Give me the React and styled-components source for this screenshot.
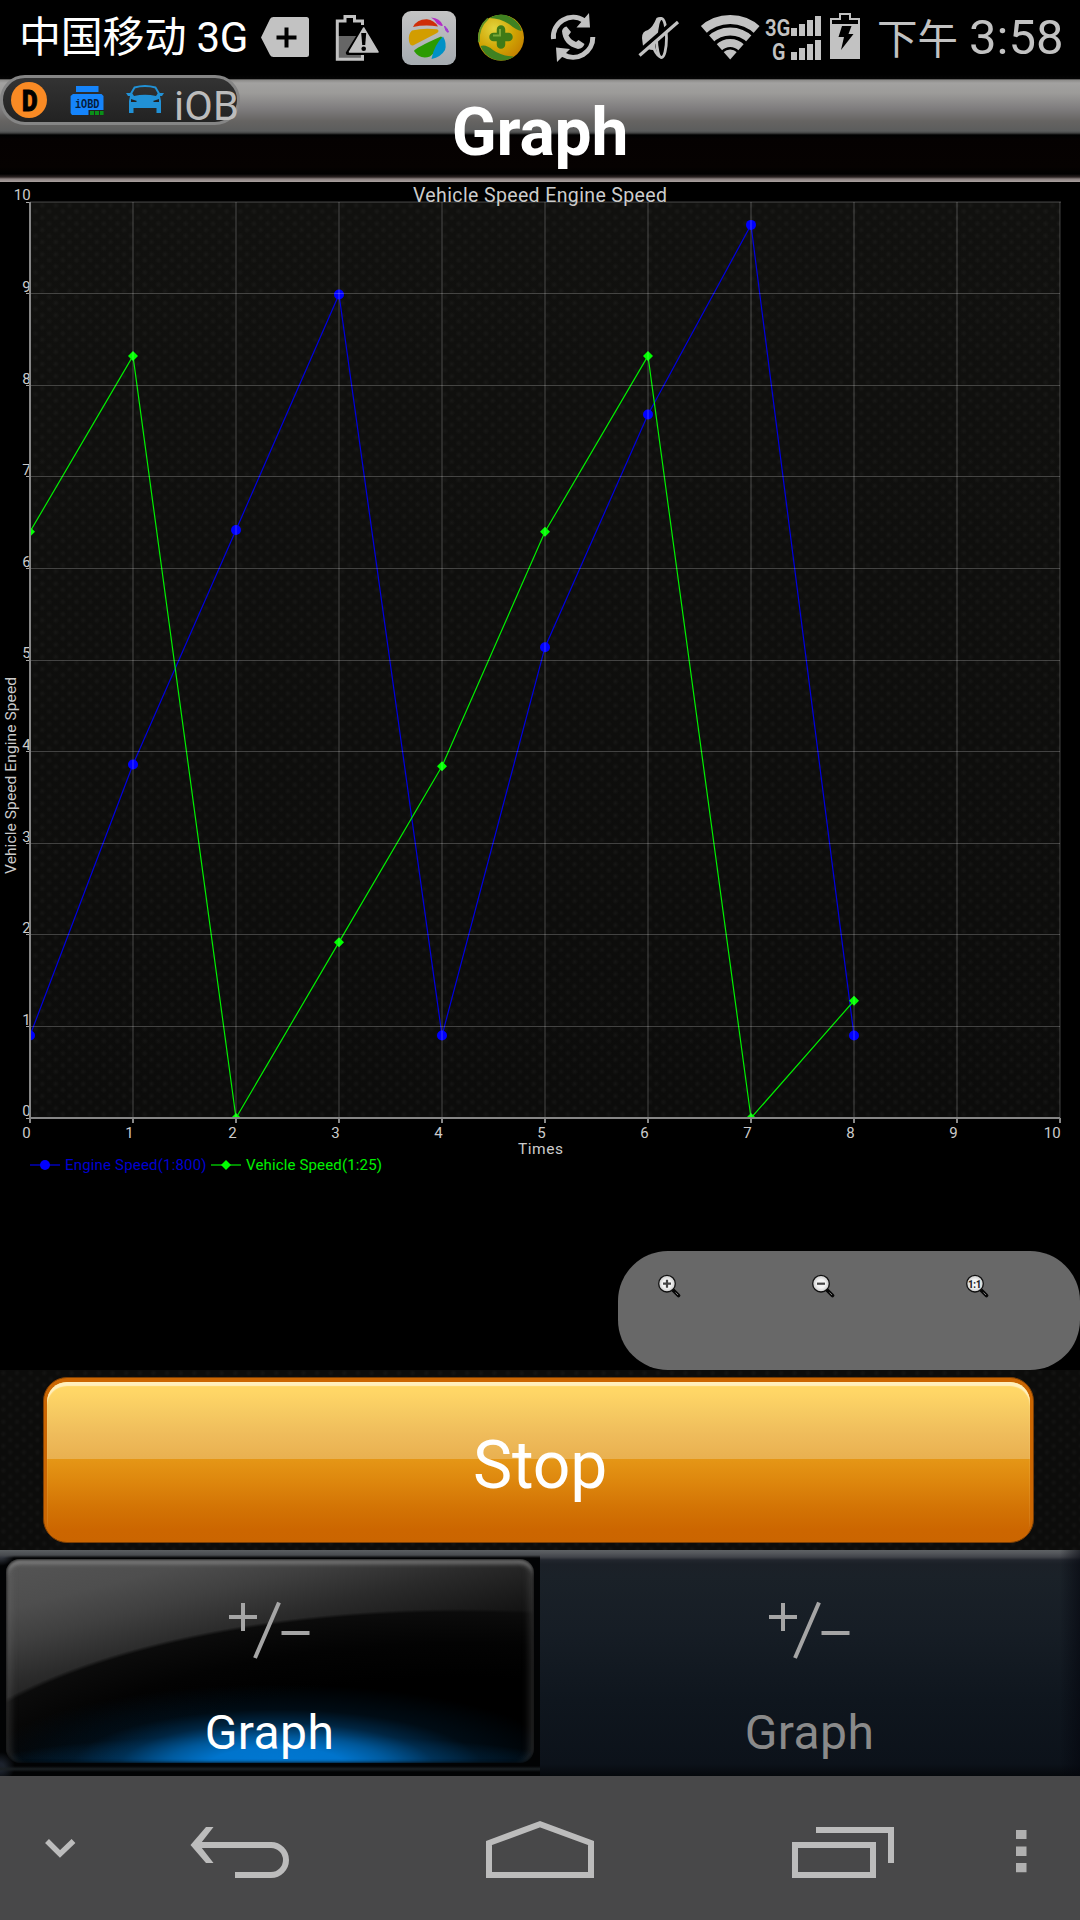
import React from "react";
import styled, { createGlobalStyle } from "styled-components";

const GlobalStyle = createGlobalStyle`
  * { box-sizing: border-box; }
  body { margin: 0; background: #000; font-family: Roboto, "Noto Sans CJK SC", sans-serif; }
  svg { display: block; }
  button { font: inherit; border: 0; padding: 0; background: none; color: inherit; }
`;

const weave = `
  radial-gradient(circle at 3.4px 3px, rgba(255,255,255,0.035) 0, rgba(255,255,255,0) 3.4px) 0 0 / 13.65px 12.2px,
  radial-gradient(circle at 10.2px 9.1px, rgba(255,255,255,0.035) 0, rgba(255,255,255,0) 3.4px) 0 0 / 13.65px 12.2px,
  #0c0c0b`;

const Screen = styled.div`
  position: relative;
  width: 1080px;
  height: 1920px;
  overflow: hidden;
  display: flex;
  flex-direction: column;
  background: #000;
`;

const StatusBar = styled.div`
  height: 75px;
  flex: none;
  display: flex;
  color: #c2c2c2;
`;
const Carrier = styled.div`
  width: 249px;
  padding-left: 19px;
  font-size: 42px;
  line-height: 76px;
  letter-spacing: -0.2px;
  white-space: nowrap;
  color: #fff;
`;
const StatusRight = styled.div`
  display: flex;
  margin-left: auto;
`;
const Clock = styled.div`
  width: 213px;
  padding-left: 10px;
  display: flex;
  align-items: baseline;
  white-space: nowrap;
  line-height: 76px;
`;
const Period = styled.span`
  font-size: 40.5px;
  width: 80px;
`;
const Time = styled.span`
  font-size: 49px;
  margin-left: 12px;
  letter-spacing: 0;
`;

const Header = styled.header`
  height: 107px;
  flex: none;
  display: flex;
  justify-content: center;
  padding-top: 19px;
  background: linear-gradient(
    #000 0, #050505 3.5px, #8c8b89 5px, #a2a1a0 8px, #9c9b99 18px, #7e7c7d 34px, #666462 46px,
    #5b5c5c 56px, #424343 58px, #000 60px, #050101 64px, #060201 92px, #000 99px,
    #2b2322 102px, #8b8180 104px, #aaa19f 107px
  );
`;
const Title = styled.h1`
  margin: 0;
  font-size: 66px;
  line-height: 77px;
  font-weight: 700;
  letter-spacing: -0.2px;
  color: #fff;
`;

const FloatingBadge = styled.div`
  position: absolute;
  left: 0;
  top: 75px;
  width: 240px;
  height: 50px;
  border: 3px solid #858585;
  border-radius: 25px;
  background: linear-gradient(#333, #222);
`;
const FloatingContent = styled.div`
  margin: -3px 0 0 -3px;
  display: flex;
  width: 244px;
  height: 50px;
`;
const FloatingText = styled.span`
  font-size: 41.5px;
  line-height: 62px;
  letter-spacing: 0.2px;
  color: #bcbcbc;
`;

const ChartPanel = styled.section`
  height: 1188px;
  flex: none;
  display: flex;
  flex-direction: column;
  background: #000;
`;
const ZoomControls = styled.div`
  align-self: flex-end;
  display: grid;
  grid-template-columns: repeat(3, 1fr);
  width: 462px;
  height: 119px;
  border-radius: 50px;
  background: #686868;
`;
const ZoomButton = styled.button`
  display: flex;
  align-items: flex-start;
  padding: 22px 0 0 38px;
`;

const ActionArea = styled.section`
  height: 180px;
  flex: none;
  padding: 7px 46px 7px 43px;
  background: ${weave};
`;
const StopButton = styled.button`
  width: 100%;
  height: 166px;
  border: 1px solid #7c3e04;
  border-radius: 24px;
  padding: 4px 3px 1px;
  display: flex;
  background: #cb6602;
`;
const StopFace = styled.span`
  flex: 1;
  border-radius: 20px;
  display: flex;
  align-items: center;
  justify-content: center;
  font-size: 66px;
  letter-spacing: -0.2px;
  padding: 7px 0 0 3px;
  color: #fff;
  box-shadow: inset 0 4px 1px #ffefbd;
  background: linear-gradient(
    #ffd866 0, #ffd666 10px, #f6ca62 30px, #efbc5b 52px, #e9b050 77px,
    #e59616 77.5px, #de880e 98px, #d37405 125px, #cc6600 148px, #cb6500 160px
  );
`;

const TabBar = styled.nav`
  height: 226px;
  flex: none;
  display: grid;
  grid-template-columns: 1fr 1fr;
  background:
    linear-gradient(to right, rgba(4,6,14,0) 1060px, rgba(4,6,14,0.6) 1080px),
    linear-gradient(#5e6265 0, #55585c 3px, #41444a 7px, #22262e 10px, #1b2027 14px,
      #1a2128 26px, #161d25 80px, #0f161e 150px, #0c121a 214px, #05080c 226px);
`;
const Tab = styled.button`
  display: flex;
  padding: 9px 6px 13px 6px;
  color: ${(p) => (p.$active ? "#fff" : "#8a8a8a")};
  background: ${(p) =>
    p.$active
      ? `linear-gradient(#5a5e61 0, #494c50 5px, rgba(20,22,24,0) 8px),
         linear-gradient(transparent 216px, #1b2023 219px, transparent 222px),
         radial-gradient(circle at 0 0, #30343c 8px, transparent 16px),
         radial-gradient(circle at 0 217px, #1c222c 4px, transparent 15px), #020304`
      : "none"};
`;
const TabFace = styled.span`
  flex: 1;
  display: flex;
  flex-direction: column;
  align-items: center;
  border-radius: 14px;
  box-shadow: ${(p) =>
    p.$active
      ? "inset 0 0 3px 1px rgba(0,0,0,.75), inset 0 6px 4px -1px rgba(150,150,150,.65), inset 9px 0 7px -4px rgba(130,130,130,.25), inset -9px 0 7px -4px rgba(120,120,120,.28)"
      : "none"};
  background: ${(p) =>
    p.$active
      ? `radial-gradient(ellipse 250px 70px at 271px 208px, #0079d4 0, #0074cc 28%, rgba(0,98,172,.85) 45%, rgba(0,62,110,.6) 63%, rgba(0,34,60,.35) 82%, rgba(0,14,26,0) 118%),
         radial-gradient(ellipse 290px 30px at 271px 206px, rgba(0,110,190,.55) 20%, transparent),
         radial-gradient(ellipse 560px 215px at 454px 265px, #000 68%, #030303 84%, #0b0b0b 98.5%, transparent 100%),
         linear-gradient(166deg, #555 0, #4e4e4e 15%, #404040 25%, #2b2b2b 37%, #1b1b1b 48%, #0a0a0a 60%, #060606 100%)`
      : "none"};
`;
const PlusMinusBox = styled.span`
  margin-top: 42px;
  margin-right: 2px;
  height: 58px;
`;
const TabLabel = styled.span`
  margin-top: 46px;
  font-size: 48px;
  line-height: 56px;
  letter-spacing: 0.4px;
  margin-right: 1px;
`;

const NavBar = styled.footer`
  height: 144px;
  flex: none;
  display: flex;
  background: #484849;
`;

const Icon = ({ x, y = 0, w, h, children }) => (
  <svg width={w} height={h} viewBox={`${x} ${y} ${w} ${h}`} fill="none">
    {children}
  </svg>
);

const G = "#c2c2c2";

const TagIcon = () => (
  <Icon x={249} w={72} h={75}>
    <path d="M261 37.5L270 19Q271 17 273.500 17H306.500Q309 17 309 19.500V54.500Q309 57 306.500 57H273.500Q271 57 270 55Z" fill={G} />
    <path d="M276.500 37.500H296.500M286.500 27.500V47.500" stroke="#000" strokeWidth="4" />
  </Icon>
);
const BatteryAlertIcon = () => (
  <Icon x={321} w={72} h={75}>
    <path d="M337.500 36H362V59H337.500Z" fill="#666" />
    <path d="M362.500 25V21H354.500V16.500H345V21H337.300V59.300H362.500V54" stroke={G} strokeWidth="3" />
    <path d="M363.700 27.500L379.500 53H347.800Z" fill="#000" stroke="#000" strokeWidth="4" strokeLinejoin="round" />
    <path d="M363.700 28L378 52H349.500Z" fill={G} stroke={G} strokeWidth="1.500" strokeLinejoin="round" />
    <path d="M361.200 33H366.200L365.200 45H362.200Z" fill="#000" />
    <circle cx="363.700" cy="48.800" r="2.300" fill="#000" />
  </Icon>
);
const PetalsIcon = () => (
  <Icon x={393} w={72} h={75}>
    <defs>
      <linearGradient id="tile" x1="0" y1="0" x2="0" y2="1">
        <stop offset="0" stopColor="#c4c4c4" />
        <stop offset="1" stopColor="#a5abb0" />
      </linearGradient>
    </defs>
    <rect x="402" y="11" width="54" height="54" rx="9" fill="url(#tile)" />
    <path d="M413 27Q417 19 427 19.300Q434 20 438 26.500Q425 24.500 413 27Z" fill="#cf2e08" />
    <path d="M412 30.500Q424 27.500 437 29.300Q440 31 437 33L413 45.500Q410 46 409 41Q408 34 412 30.500Z" fill="#d29d00" />
    <path d="M414 51Q415 48 441 36.500Q443 37 441.500 40Q436 52 430 56.500Q420 60 414 51Z" fill="#2b9b03" />
    <path d="M431.500 59Q434 45 443 36.500Q447 43 445 50Q441 57 431.500 59Z" fill="#0091c6" />
    <path d="M431 17.500Q440 18 443 25.500Q441 27 437 23.500Q434 19 431 17.500Z" fill="#b42cc4" />
    <path d="M444.500 26Q448 29 448.500 32Q446 33 444.500 26Z" fill="#a23ad0" stroke="#a23ad0" />
  </Icon>
);
const ShieldPlusIcon = () => (
  <Icon x={465} w={72} h={75}>
    <defs>
      <radialGradient id="ball" cx=".35" cy=".3" r=".8">
        <stop offset="0" stopColor="#e2d43c" />
        <stop offset=".55" stopColor="#d0a404" />
        <stop offset="1" stopColor="#c27c00" />
      </radialGradient>
    </defs>
    <circle cx="501" cy="37.700" r="23" fill="url(#ball)" />
    <path d="M489 18Q501 11 512 18Q521 24 521.500 31Q516 30 509 24Q500 18 489 18Z" fill="#3f8121" />
    <path d="M480.500 46Q486 44 493 50Q501 56 514 56.500Q504 63 493 59Q484 55 480.500 46Z" fill="#3f8121" />
    <path d="M488 18.500Q478 27 478.800 42" stroke="#5f9428" strokeWidth="1.800" />
    <path d="M493.500 37H508.500M501 29.500V44.500" stroke="#3f7a16" strokeWidth="8.500" strokeLinecap="round" />
    <path d="M493 35.500H500V29" stroke="#7aa738" strokeWidth="2" />
  </Icon>
);
const CallSyncIcon = () => (
  <Icon x={537} w={72} h={75}>
    <path d="M553.500 39A19.700 19.700 0 0 1 584 20.500M592.800 37A19.700 19.700 0 0 1 563 54.500" stroke={G} strokeWidth="5" />
    <path d="M589 13L590 27.500L576.500 27.500ZM556 47.500L570 49L557 62Z" fill={G} />
    <path d="M562 31Q563 27 566.500 26.500L571 32L568.500 35.500Q571 40 576 42L578.500 40L584.500 44Q583 48.500 578 49Q563 45 562 31Z" fill={G} />
  </Icon>
);
const MuteIcon = () => (
  <Icon x={624} w={72} h={75}>
    <path d="M642 38Q642 31 648 30Q653 27 656.500 18Q658.500 16.500 662 17L658 24L655 46Q657 54 661 58.500Q656 57 653 50Q648 50 643 46Z" fill={G} />
    <ellipse cx="661.500" cy="38" rx="5" ry="19.500" stroke={G} strokeWidth="2.800" />
    <path d="M636.500 54L676 19.500" stroke="#000" strokeWidth="4" />
    <path d="M639.500 55.500L678 22" stroke={G} strokeWidth="3.200" />
  </Icon>
);
const WifiIcon = () => (
  <Icon x={696} w={68} h={75}>
    <clipPath id="fan"><path d="M730.200 59.500L700 25Q714 8 730 8Q746 8 760.500 25Z" /></clipPath>
    <g clipPath="url(#fan)">
      <circle cx="730.200" cy="59" r="9.500" fill={G} />
      <circle cx="730.200" cy="59" r="16" stroke={G} strokeWidth="8" />
      <circle cx="730.200" cy="60" r="28.500" stroke={G} strokeWidth="8" />
      <circle cx="730.200" cy="60" r="40.500" stroke={G} strokeWidth="9" />
    </g>
  </Icon>
);
const Bars = ({ bottom, tops }) =>
  tops.map((t, i) => <rect key={t} x={791 + i * 8} y={t} width="6" height={bottom - t} fill={G} />);
const SignalIcon = () => (
  <Icon x={764} w={60} h={75}>
    <text x="765" y="36" fontFamily="Roboto" fontWeight="600" fontSize="23.500" textLength="25.500" lengthAdjust="spacingAndGlyphs" fill={G}>3G</text>
    <text x="772" y="60" fontFamily="Roboto" fontWeight="600" fontSize="23.500" textLength="13.500" lengthAdjust="spacingAndGlyphs" fill={G}>G</text>
    <Bars bottom={36} tops={[28, 24, 20, 16]} />
    <Bars bottom={60} tops={[52, 48, 44, 40]} />
  </Icon>
);
const ChargingIcon = () => (
  <Icon x={824} w={43} h={75}>
    <path d="M830 59V18H839V13H851V18H860V59Z" fill={G} />
    <path d="M832 20H841V15H849V20H858V24H832Z" fill="#000" />
    <path d="M842 26H851.500L848.500 34H853.500L841 50L844 37H838.500Z" fill="#000" />
  </Icon>
);

const BadgeIcons = () => (
  <Icon x={0} y={75} w={174} h={50}>
    <circle cx="29" cy="100" r="18" fill="#f98a24" />
    <text x="22" y="111" fontFamily="Roboto" fontWeight="900" fontSize="30" textLength="15.500" lengthAdjust="spacingAndGlyphs" fill="#000" stroke="#000">D</text>
    <path d="M76 86H98.500V92H76ZM73 94H101.500L103.500 96V115H72L70.600 113V96Z" fill="#1584fb" />
    <text x="75" y="107.500" fontFamily="Liberation Mono" fontWeight="700" fontSize="12" textLength="24.500" lengthAdjust="spacingAndGlyphs" fill="#061c3a">iOBD</text>
    <path d="M88.500 110H104V116H88.500Z" fill="#222" />
    <path d="M90 113H103.600" stroke="#0a8f18" strokeWidth="4" strokeDasharray="4 1" />
    <path d="M130.500 94.500L134.500 87.500Q145 84.500 155.500 87.500L159.500 94.500" stroke="#2191d6" strokeWidth="2" />
    <path d="M126 93H132L134 96Q145 93.500 156 96L158 93H164L162 96H160L161 101V113H156.500V108H133.500V113H129V101L130 96H128Z" fill="#2191d6" />
    <path d="M131 99L137 101L136 102H131ZM159 99L153 101L154 102H159Z" fill="#222" />
  </Icon>
);

const px = (v) => 30 + v * 103;
const py = (v) => 1118 - v * 91.6;
const engine = [0.9, 3.86, 6.42, 8.99, 0.9, 5.14, 7.68, 9.75, 0.9];
const vehicle = [6.4, 8.32, 0, 1.92, 3.84, 6.4, 8.32, 0, 1.28];
const points = (s) => s.map((v, i) => `${px(i)},${py(v)}`).join(" ");
const scale = [0, 1, 2, 3, 4, 5, 6, 7, 8, 9, 10];
const Diamond = ({ x, y }) => <path d={`M${x - 5} ${y}L${x} ${y - 5}L${x + 5} ${y}L${x} ${y + 5}Z`} fill="#0f0" />;

const Chart = () => (
  <svg width="1080" height="1069" viewBox="0 182 1080 1069" fontFamily="Roboto">
    <defs>
      <radialGradient id="dot">
        <stop offset="0" stopColor="#fff" stopOpacity=".04" />
        <stop offset="1" stopColor="#fff" stopOpacity="0" />
      </radialGradient>
      <linearGradient id="plot" x1="0" y1="0" x2="0" y2="1">
        <stop offset="0" stopColor="#11110f" />
        <stop offset="1" stopColor="#0c0c0b" />
      </linearGradient>
      <pattern id="mesh" x="30" y="202" width="13.650" height="12.200" patternUnits="userSpaceOnUse">
        <circle cx="5.500" cy="9.500" r="3.500" fill="url(#dot)" />
        <circle cx="12.200" cy="3.500" r="3.500" fill="url(#dot)" />
        <circle cx="-1.400" cy="3.500" r="3.500" fill="url(#dot)" />
      </pattern>
      <clipPath id="area"><rect x="30" y="202" width="1030" height="916" /></clipPath>
    </defs>
    <rect x="30" y="202" width="1030" height="916" fill="url(#plot)" />
    <rect x="30" y="202" width="1030" height="916" fill="url(#mesh)" />
    <g clipPath="url(#area)">
      <polyline points={points(engine)} fill="none" stroke="#0000e0" strokeWidth="1.200" />
      {engine.map((v, i) => <circle key={i} cx={px(i)} cy={py(v)} r="5" fill="#0000ff" />)}
      <polyline points={points(vehicle)} fill="none" stroke="#00ee00" strokeWidth="1.200" />
      {vehicle.map((v, i) => <Diamond key={i} x={px(i)} y={py(v)} />)}
    </g>
    {scale.slice(1).map((v) => (
      <g key={v}>
        <path d={`M${px(v)} 202V1118`} stroke="#fff" strokeOpacity=".12" strokeWidth="2" />
        <path
          d={v === 10 ? "M30 202H1061" : `M30 ${Math.floor(py(v)) + 0.5}H1060`}
          stroke="#fff"
          strokeOpacity={v === 10 ? 0.13 : 0.22}
          strokeWidth={v === 10 ? 2 : 1}
        />
      </g>
    ))}
    <g fontSize="15" fill="#ccc" textAnchor="end">
      {scale.map((v) => (
        <g key={v}>
          <path d={`M26 ${Math.floor(py(v)) + 0.5}H30`} stroke="#aaa" />
          <path d={`M${px(v)} 1118V1123`} stroke="#888" strokeWidth="2" />
          <text x="30.700" y={py(v) - 1.7}>{v}</text>
          <text x={px(v) + 0.7} y="1138">{v}</text>
        </g>
      ))}
    </g>
    <path d="M30 202V1118H1060" stroke="#868686" strokeWidth="2" fill="none" />
    <g fill="#ccc" textAnchor="middle">
      <text x="540" y="201.700" fontSize="19.500" textLength="254">Vehicle Speed Engine Speed</text>
      <text x="540.500" y="1154" fontSize="15.500" textLength="45">Times</text>
      <text transform="translate(16 775.500) rotate(-90)" fontSize="15.500" textLength="197">Vehicle Speed Engine Speed</text>
    </g>
    <path d="M30 1165H60" stroke="#00008c" strokeWidth="2" />
    <circle cx="45" cy="1165" r="5" fill="#0000ff" />
    <text x="65" y="1170" fontSize="15" textLength="141.500" fill="#0000d0">Engine Speed(1:800)</text>
    <path d="M211 1165H241" stroke="#008c00" strokeWidth="2" />
    <Diamond x={226} y={1165} />
    <text x="246" y="1170" fontSize="15" textLength="136" fill="#00f000">Vehicle Speed(1:25)</text>
  </svg>
);

const Magnifier = ({ children }) => (
  <svg width="28" height="28" viewBox="0 0 28 28" fill="none">
    <defs>
      <radialGradient id="lens"><stop offset=".5" stopColor="#f4f4f4" /><stop offset="1" stopColor="#c8c8c8" /></radialGradient>
    </defs>
    <path d="M17 17L22.500 22.500" stroke="#080808" strokeWidth="3.800" strokeLinecap="round" />
    <path d="M19.500 19.500L22 22" stroke="#777" strokeWidth="1" />
    <circle cx="11" cy="10.700" r="8.300" fill="url(#lens)" stroke="#101010" strokeWidth="1.300" />
    {children}
  </svg>
);

const PlusMinus = () => (
  <svg width="82" height="58" viewBox="229 1601 82 58" fill="none" stroke="#a5a5a5" strokeWidth="4">
    <path d="M230 1617H258M244 1603V1631M280 1602.500L256 1658M282.500 1633H310.500" />
  </svg>
);

const TabItem = ({ active, label }) => (
  <Tab $active={active}>
    <TabFace $active={active}>
      <PlusMinusBox><PlusMinus /></PlusMinusBox>
      <TabLabel>{label}</TabLabel>
    </TabFace>
  </Tab>
);

const N = "#bcbcbc";

export default function App() {
  return (
    <Screen>
      <GlobalStyle />
      <StatusBar>
        <Carrier>中国移动 3G</Carrier>
        <TagIcon />
        <BatteryAlertIcon />
        <PetalsIcon />
        <ShieldPlusIcon />
        <CallSyncIcon />
        <StatusRight>
          <MuteIcon />
          <WifiIcon />
          <SignalIcon />
          <ChargingIcon />
          <Clock>
            <Period>下午</Period>
            <Time>3:58</Time>
          </Clock>
        </StatusRight>
      </StatusBar>

      <Header><Title>Graph</Title></Header>

      <ChartPanel>
        <Chart />
        <ZoomControls>
          <ZoomButton aria-label="+">
            <Magnifier><path d="M7 10.700H15M11 6.700V14.700" stroke="#444" strokeWidth="2.200" /></Magnifier>
          </ZoomButton>
          <ZoomButton aria-label="-">
            <Magnifier><path d="M7 10.700H15" stroke="#444" strokeWidth="2.200" /></Magnifier>
          </ZoomButton>
          <ZoomButton aria-label="1:1">
            <Magnifier>
              <text x="10.700" y="14.500" textAnchor="middle" fontFamily="Roboto" fontWeight="900" fontSize="10.500" textLength="13" lengthAdjust="spacingAndGlyphs" fill="#222">1:1</text>
            </Magnifier>
          </ZoomButton>
        </ZoomControls>
      </ChartPanel>

      <ActionArea>
        <StopButton><StopFace>Stop</StopFace></StopButton>
      </ActionArea>

      <TabBar>
        <TabItem active label="Graph" />
        <TabItem label="Graph" />
      </TabBar>

      <NavBar>
        <Icon x={0} y={1776} w={120} h={144}>
          <path d="M47 1841L60 1854L73.500 1841" stroke={N} strokeWidth="5.500" />
        </Icon>
        <Icon x={120} y={1776} w={240} h={144}>
          <path d="M198 1845H271A15 15 0 0 1 271 1875H235" stroke={N} strokeWidth="6" />
          <path d="M190.500 1845L206 1827H213.500L199.500 1845L213.500 1863H206Z" fill={N} />
        </Icon>
        <Icon x={360} y={1776} w={360} h={144}>
          <path d="M489 1875V1843L540 1824.300L591 1843V1875Z" stroke={N} strokeWidth="6" />
        </Icon>
        <Icon x={720} y={1776} w={240} h={144}>
          <path d="M795 1845H873V1875H795ZM816 1830H891V1863" stroke={N} strokeWidth="6" />
        </Icon>
        <Icon x={960} y={1776} w={120} h={144}>
          <path d="M1016 1830H1026.500V1839H1016ZM1016 1846.500H1026.500V1856H1016ZM1016 1863H1026.500V1872.300H1016Z" fill="#b0b0b0" />
        </Icon>
      </NavBar>

      <FloatingBadge>
        <FloatingContent>
          <BadgeIcons />
          <FloatingText>iOB</FloatingText>
        </FloatingContent>
      </FloatingBadge>
    </Screen>
  );
}
